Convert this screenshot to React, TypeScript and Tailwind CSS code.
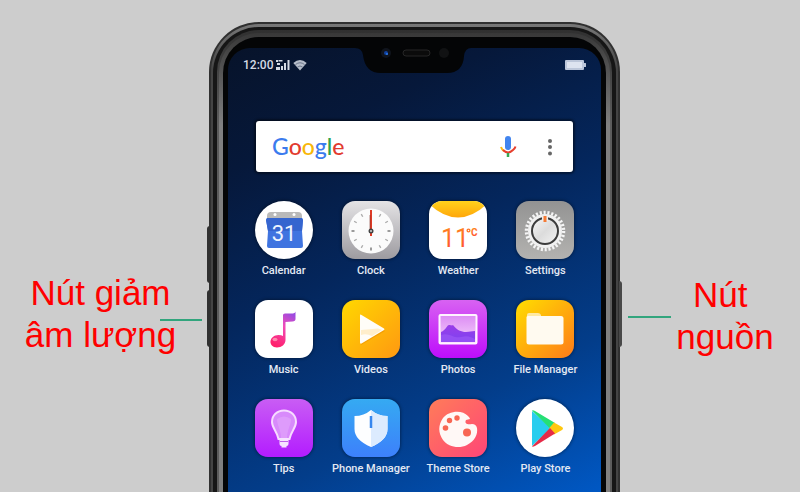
import type { ReactNode } from 'react';

function Calendar() {
  return (
    <svg viewBox="0 0 58 58" className="size-full">
      <circle cx="29" cy="29" r="29" fill="#fff" />
      <path d="M12 15q0-4 4-4h27q4 0 4 4v3H12z" fill="#b9b9b9" />
      <circle cx="20" cy="13.500" r="1.500" fill="#fff" />
      <circle cx="39" cy="13.500" r="1.500" fill="#fff" />
      <path d="M12 17h35l1 2-1 11 1 15q0 2-2 2H14q-2 0-2-2l1-15-2-11z" fill="#3f74e0" />
      <path d="M12 17h35l1 2-1 11H13l-2-11z" fill="#3565cf" />
      <text x="29" y="39.500" textAnchor="middle" fontSize="22" fill="#eef4ff" fontFamily="Roboto, sans-serif">31</text>
    </svg>
  );
}

const hours = [30, 60, 90, 120, 150, 180, 210, 240, 270, 300, 330];

function Clock() {
  return (
    <svg viewBox="0 0 58 58" className="size-full">
      <defs>
        <linearGradient id="clockBody" x2="0" y2="1">
          <stop stopColor="#e4e3e5" />
          <stop offset="1" stopColor="#9d9ba0" />
        </linearGradient>
      </defs>
      <rect width="58" height="58" rx="13" fill="url(#clockBody)" />
      <circle cx="29" cy="30" r="22.500" fill="#fbfbfb" />
      {hours.map((a) => (
        <path key={a} d="M29 10.500v3" stroke={a % 90 ? '#aaa' : '#666'} strokeWidth="1.300" transform={`rotate(${a} 29 30)`} />
      ))}
      <path d="M29 9v26" stroke="#dd3a25" strokeWidth="2" />
      <path d="M28 14v15" stroke="#7c2d24" strokeWidth=".6" />
      <circle cx="29" cy="30" r="2.500" fill="#444" />
      <circle cx="29" cy="30" r="1" fill="#ccc" />
    </svg>
  );
}

function Weather() {
  return (
    <svg viewBox="0 0 58 58" className="size-full">
      <defs>
        <clipPath id="weatherClip"><rect width="58" height="58" rx="13" /></clipPath>
        <linearGradient id="sun" x2="0" y2="1">
          <stop stopColor="#ffd21c" />
          <stop offset="1" stopColor="#ffa60a" />
        </linearGradient>
        <linearGradient id="heat" x2="0" y2="1">
          <stop stopColor="#ff8a1c" />
          <stop offset="1" stopColor="#ff4a35" />
        </linearGradient>
      </defs>
      <g clipPath="url(#weatherClip)">
        <rect width="58" height="58" fill="#fff" />
        <path d="M0 0h58v3Q29 30 0 3z" fill="url(#sun)" />
      </g>
      <g fill="url(#heat)" fontFamily="Roboto, sans-serif">
        <text x="12" y="46" fontSize="25">11</text>
        <text x="42" y="35" fontSize="10" fontWeight="bold">C</text>
      </g>
      <circle cx="39.500" cy="29.500" r="1.400" fill="none" stroke="#ff7326" strokeWidth="1.300" />
    </svg>
  );
}

function Settings() {
  return (
    <svg viewBox="0 0 58 58" className="size-full">
      <defs>
        <linearGradient id="metal" x2="0" y2="1">
          <stop stopColor="#939393" />
          <stop offset="1" stopColor="#b3b2b0" />
        </linearGradient>
        <linearGradient id="knob" x2="1" y2="1">
          <stop stopColor="#f8f8f8" />
          <stop offset=".5" stopColor="#dcdcdc" />
          <stop offset="1" stopColor="#f3f3f3" />
        </linearGradient>
      </defs>
      <rect width="58" height="58" rx="13" fill="url(#metal)" />
      <circle cx="29" cy="30" r="18.500" fill="none" stroke="#f5f5f5" strokeWidth="3.500" strokeDasharray="2.100 1.772" />
      <circle cx="29" cy="30" r="17" fill="#f1f1f1" />
      <circle cx="29" cy="30" r="13" fill="url(#knob)" stroke="#3c3c3c" strokeWidth="2" />
      <path d="M26 14h6v6h-6z" fill="#eee" />
      <path d="M29 15v6" stroke="#f57a35" strokeWidth="3" />
    </svg>
  );
}

function Music() {
  return (
    <svg viewBox="0 0 58 58" className="size-full">
      <defs>
        <linearGradient id="note" x1=".7" x2=".3" y2="1">
          <stop stopColor="#9b4be0" />
          <stop offset=".4" stopColor="#f04cb9" />
          <stop offset="1" stopColor="#ff1f6a" />
        </linearGradient>
      </defs>
      <rect width="58" height="58" rx="13" fill="#fff" />
      <path d="M28 15q0-1.500 2-1.500h8q2.500-.5 2.500-2v7.500q0 2-3 2.500l-7 .5v18c0 4.500-4 7.500-8.500 7.500S15 44 15.500 41s3.500-6 8-6q3 0 4.500 1z" fill="url(#note)" />
      <ellipse cx="20" cy="39.500" rx="2.500" ry="1.800" fill="#ff86ad" />
    </svg>
  );
}

function Videos() {
  return (
    <svg viewBox="0 0 58 58" className="size-full">
      <defs>
        <linearGradient id="video" x2="1" y2="1">
          <stop stopColor="#ffd800" />
          <stop offset="1" stopColor="#ff9811" />
        </linearGradient>
      </defs>
      <rect width="58" height="58" rx="13" fill="url(#video)" />
      <path d="M19 17l24 14-24 14z" fill="#e98b00" opacity=".5" />
      <path d="M18 15.500q0-1.500 1.500-.5L42 28.500q1 .8 0 1.500L19.500 43.500q-1.500.5-1.500-1z" fill="#fffdf8" />
      <path d="M19 30l17-1.500 4 1.500-10 6q-6-3-11-1z" fill="#ffeecb" />
    </svg>
  );
}

function Photos() {
  return (
    <svg viewBox="0 0 58 58" className="size-full">
      <defs>
        <linearGradient id="photo" x2="0" y2="1">
          <stop stopColor="#d862f2" />
          <stop offset="1" stopColor="#bd0dfb" />
        </linearGradient>
        <linearGradient id="sky" x2="0" y2="1">
          <stop stopColor="#dc8bf4" />
          <stop offset="1" stopColor="#f6d5fb" />
        </linearGradient>
        <linearGradient id="hill" x2="0" y2="1">
          <stop stopColor="#9a3de8" />
          <stop offset="1" stopColor="#7d43f1" />
        </linearGradient>
      </defs>
      <rect width="58" height="58" rx="13" fill="url(#photo)" />
      <rect x="10.500" y="15" width="37" height="28.500" rx="1" fill="url(#sky)" stroke="#fff3ff" strokeWidth="2" />
      <path d="M12 32c5-2 6-7 8-7s3 1 4 0c4 5 8 7 13 7 4 0 5-1 9-1v11H12z" fill="url(#hill)" />
      <path d="M12 35c8-3 13 4 20 2s10 0 14 2v3H12z" fill="#a05af6" opacity=".6" />
    </svg>
  );
}

function FileManager() {
  return (
    <svg viewBox="0 0 58 58" className="size-full">
      <defs>
        <linearGradient id="files" x2="1" y2="1">
          <stop stopColor="#ffde00" />
          <stop offset="1" stopColor="#ff7b19" />
        </linearGradient>
      </defs>
      <rect width="58" height="58" rx="13" fill="url(#files)" />
      <path d="M11 15q0-2 2-2h9q2 0 3 2v4H11z" fill="#ffe9a2" />
      <path d="M10.500 17q0-1 2-1H45q2.500 0 2.500 2.500V42q0 2.500-2.500 2.500H13q-2.500 0-2.500-2.500z" fill="#fffaf0" />
    </svg>
  );
}

function Tips() {
  return (
    <svg viewBox="0 0 58 58" className="size-full">
      <defs>
        <linearGradient id="tip" x2="0" y2="1">
          <stop stopColor="#c95df4" />
          <stop offset="1" stopColor="#b31cff" />
        </linearGradient>
      </defs>
      <rect width="58" height="58" rx="13" fill="url(#tip)" />
      <path d="M29 11.500c-7 0-12 5-12 11.500 0 6 5 9 6.500 17h11C36 32 41 29 41 23c0-6.500-5-11.500-12-11.500z" fill="#d88afb" stroke="#f7dcff" strokeWidth="2" />
      <path d="M26 39c0-8-4-13-4-19q7-5 14 0c0 6-4 11-4 19z" fill="#e1a2fb" opacity=".7" />
      <path d="M24.500 39h9v6q0 2-2 2v1.500h-5V47q-2 0-2-2z" fill="#f6e3ff" />
      <path d="M25 42.500h8" stroke="#bd60e8" />
    </svg>
  );
}

function PhoneManager() {
  return (
    <svg viewBox="0 0 58 58" className="size-full">
      <defs>
        <linearGradient id="guard" x2="0" y2="1">
          <stop stopColor="#35aaf2" />
          <stop offset="1" stopColor="#3d80fb" />
        </linearGradient>
      </defs>
      <rect width="58" height="58" rx="13" fill="url(#guard)" />
      <path d="M29 11q7 6 16.500 6v13q0 11-16.500 18-16.500-7-16.500-18V17Q22 17 29 11z" fill="#fdfeff" />
      <path d="M29 11q7 6 16.500 6v13q0 11-16.500 18z" fill="#dcebfe" />
      <path d="M29 17v12" stroke="#3787ee" strokeWidth="2.500" />
    </svg>
  );
}

function ThemeStore() {
  return (
    <svg viewBox="0 0 58 58" className="size-full">
      <defs>
        <linearGradient id="theme" x2="1" y2="1">
          <stop stopColor="#ff7c59" />
          <stop offset="1" stopColor="#ff4577" />
        </linearGradient>
      </defs>
      <rect width="58" height="58" rx="13" fill="url(#theme)" />
      <path d="M39 17C33 10 19 12 14 19S9 34 14 41s16 9 24 5 11-11 10-17q-1-4-5-4c-4 1-8 0-6-4l4-1q0-1-2-3z" fill="#fff8f6" />
      <g fill="#f86653">
        <circle cx="16.500" cy="29" r="2.800" />
        <circle cx="20.500" cy="21.500" r="2.700" />
        <circle cx="28" cy="19" r="2.700" />
        <circle cx="38" cy="33.500" r="4" />
      </g>
    </svg>
  );
}

function PlayStore() {
  return (
    <svg viewBox="0 0 58 58" className="size-full">
      <circle cx="29" cy="29" r="29" fill="#fff" />
      <path d="M16 12v35l19-18z" fill="#28cdee" />
      <path d="M16 11.500q1-.8 3 .5l20 12-5.500 5z" fill="#25df75" />
      <path d="M38 23.500l8 4.500q2 1.500 0 3l-8 4.500-5-6z" fill="#ffc80f" />
      <path d="M16 47.500L34 29l5 5.500-20 12.500q-2 1-3 .5z" fill="#e62b48" />
    </svg>
  );
}

const apps: { name: string; icon: ReactNode; shape: string }[] = [
  { name: 'Calendar', icon: <Calendar />, shape: 'rounded-full' },
  { name: 'Clock', icon: <Clock />, shape: 'rounded-[13px]' },
  { name: 'Weather', icon: <Weather />, shape: 'rounded-[13px]' },
  { name: 'Settings', icon: <Settings />, shape: 'rounded-[13px]' },
  { name: 'Music', icon: <Music />, shape: 'rounded-[13px]' },
  { name: 'Videos', icon: <Videos />, shape: 'rounded-[13px]' },
  { name: 'Photos', icon: <Photos />, shape: 'rounded-[13px]' },
  { name: 'File Manager', icon: <FileManager />, shape: 'rounded-[13px]' },
  { name: 'Tips', icon: <Tips />, shape: 'rounded-[13px]' },
  { name: 'Phone Manager', icon: <PhoneManager />, shape: 'rounded-[13px]' },
  { name: 'Theme Store', icon: <ThemeStore />, shape: 'rounded-[13px]' },
  { name: 'Play Store', icon: <PlayStore />, shape: 'rounded-full' },
];

function StatusBar() {
  return (
    <div className="flex h-[34px] items-center pr-[14px] pl-[15px] text-[#d5dae4]">
      <span className="text-[12px] font-medium">12:00</span>
      <svg viewBox="0 0 14 12" className="ml-[3px] h-3 w-[14px]" fill="currentColor" aria-label="Signal">
        <path d="M0 1h2v2H0zM2.500 1h4v1.500h-4zM1 4h3v2H1zM0 8h4v3H0zM5 7h2v4H5zM8 4h2v7H8zM11.500 1h2v10h-2z" />
      </svg>
      <svg viewBox="0 0 14 12" className="ml-[3px] h-3 w-[14px]" aria-label="Wi-Fi">
        <path d="M7 11.500L.3 4Q7-2 13.700 4z" fill="currentColor" opacity=".85" />
        <path d="M2.500 5.500Q7 2 11.500 5.500M4.500 8Q7 6 9.500 8" fill="none" stroke="#59637a" strokeWidth=".8" />
      </svg>
      <svg viewBox="0 0 22 10" className="ml-auto h-[10px] w-[22px]" aria-label="Battery">
        <path d="M1 0h17q1 0 1 1v2h1.500q.5 0 .5.500v3q0 .5-.5.500H19v2q0 1-1 1H1Q0 10 0 9V1q0-1 1-1z" fill="#bcc6d9" />
        <path d="M2 2h15v6H2z" fill="#dde3ef" />
      </svg>
    </div>
  );
}

function Notch() {
  return (
    <svg viewBox="0 0 116 26" className="absolute top-0 left-[127px] h-[26px] w-[116px]" aria-hidden="true">
      <path d="M0 0q7 0 8 7 2 18 18 18h66q16 0 17-17 1-8 7-8z" fill="#040506" />
      <circle cx="31" cy="5" r="5" fill="#10141c" />
      <circle cx="31" cy="5" r="2" fill="#11419e" />
      <circle cx="32" cy="6" r="1" fill="#2a7bee" />
      <rect x="48" y="2" width="27" height="6" rx="3" fill="#0b0b0b" stroke="#262626" />
      <circle cx="89" cy="5" r="5" fill="#111213" />
    </svg>
  );
}

function SearchBar() {
  return (
    <form className="mx-[28px] mt-[39px] flex h-[51px] items-center rounded-[3px] bg-white pr-[14px] pl-4 shadow-[0_0_2px_2px_#00000066]">
      <label htmlFor="search" className="pb-[2px] font-[Lato,sans-serif] text-[23px] leading-7 font-medium">
        <span className="text-[#3b7bee]">G</span>
        <span className="text-[#e23b2f]">o</span>
        <span className="text-[#f8b708]">o</span>
        <span className="text-[#3b7bee]">g</span>
        <span className="text-[#2ca350]">l</span>
        <span className="text-[#e23b2f]">e</span>
      </label>
      <input id="search" type="text" className="min-w-0 flex-1 bg-transparent px-2 text-sm text-gray-800 outline-none" />
      <button type="button" aria-label="Voice search">
        <svg viewBox="0 0 18 24" className="h-6 w-[18px]">
          <rect x="6" y="1" width="6" height="14" rx="3" fill="#4285ef" />
          <path d="M2 12q1 3 3 4" fill="none" stroke="#fbb910" strokeWidth="2" />
          <path d="M4 15q5 5 10 0 2-1.500 2.500-3.500" fill="none" stroke="#e6402f" strokeWidth="2" />
          <path d="M9 18v4" stroke="#35a853" strokeWidth="2.500" />
        </svg>
      </button>
      <button type="button" aria-label="More options" className="ml-6">
        <svg viewBox="0 0 18 18" className="size-[18px]" fill="#676767">
          <circle cx="9" cy="3" r="2" />
          <circle cx="9" cy="9" r="2" />
          <circle cx="9" cy="15.500" r="2" />
        </svg>
      </button>
    </form>
  );
}

function Phone() {
  return (
    <div className="relative w-[411px] shrink-0 pt-[22px] font-[Roboto,sans-serif]">
      <span className="absolute top-[226px] -left-[2px] h-[57px] w-[3px] rounded-l-sm bg-[#303030]" />
      <span className="absolute top-[290px] -left-[2px] h-[57px] w-[3px] rounded-l-sm bg-[#303030]" />
      <span className="absolute top-[281px] -right-[2px] h-[66px] w-[3px] rounded-r-sm bg-[#484848]" />
      <div className="flex h-full flex-col rounded-t-[50px] bg-[#303030] px-[2px] pt-[2px]">
        <div className="flex flex-1 flex-col rounded-t-[48px] bg-linear-to-b from-[#777] via-[#444] via-10% to-[#444] px-[2px] pt-[3px]">
          <div className="flex flex-1 flex-col rounded-t-[46px] bg-[#161616] px-[4px] pt-[3px]">
            <div className="flex flex-1 flex-col rounded-t-[42px] bg-linear-to-b from-[#303030] via-[#5c5c5c] via-20% to-[#5c5c5c] px-[2px] pt-[3px]">
              <div className="flex flex-1 flex-col rounded-t-[40px] bg-linear-to-b from-[#383838] via-[#808080] via-20% to-[#808080] px-[4px] pt-[4px]">
                <div className="flex flex-1 flex-col rounded-t-[36px] bg-[#040506] px-[5px] pt-[11px]">
                  <main className="relative flex-1 rounded-t-[22px] bg-linear-[155deg,#07132a_0%,#06183a_20%,#04265c_45%,#033d8a_75%,#0058c4_100%]">
                    <Notch />
                    <StatusBar />
                    <SearchBar />
                    <div className="mt-[29px] grid grid-cols-4 gap-y-[21px] px-[12px]">
                      {apps.map((app) => (
                        <button key={app.name} type="button" className="flex flex-col items-center gap-1">
                          <span className={`block size-[58px] shadow-[0_0_3px_1px_#00000055] ${app.shape}`}>{app.icon}</span>
                          <span className="text-[11px] leading-4 font-medium whitespace-nowrap text-[#e3e9f3]">{app.name}</span>
                        </button>
                      ))}
                    </div>
                  </main>
                </div>
              </div>
            </div>
          </div>
        </div>
      </div>
    </div>
  );
}

export default function App() {
  return (
    <div className="flex h-screen justify-center overflow-hidden bg-[#cdcdcd] font-['Liberation_Sans',Arial,sans-serif]">
      <aside className="relative flex-[209] pt-[272px]">
        <p className="pr-2 text-center text-[35px] leading-[42px] text-[#ff0000]">
          Nút giảm
          <br />
          âm lượng
        </p>
        <span className="absolute top-[319px] right-[7px] h-[2px] w-[42px] bg-[#32a57d]" />
      </aside>
      <Phone />
      <aside className="relative flex-[180] pt-[274px]">
        <p className="pl-[30px] text-center text-[35px] leading-[42px] text-[#ff0000]">
          {'Nút\u00a0'}
          <br />
          nguồn
        </p>
        <span className="absolute top-[316px] left-[8px] h-[2px] w-[43px] bg-[#32a57d]" />
      </aside>
    </div>
  );
}
